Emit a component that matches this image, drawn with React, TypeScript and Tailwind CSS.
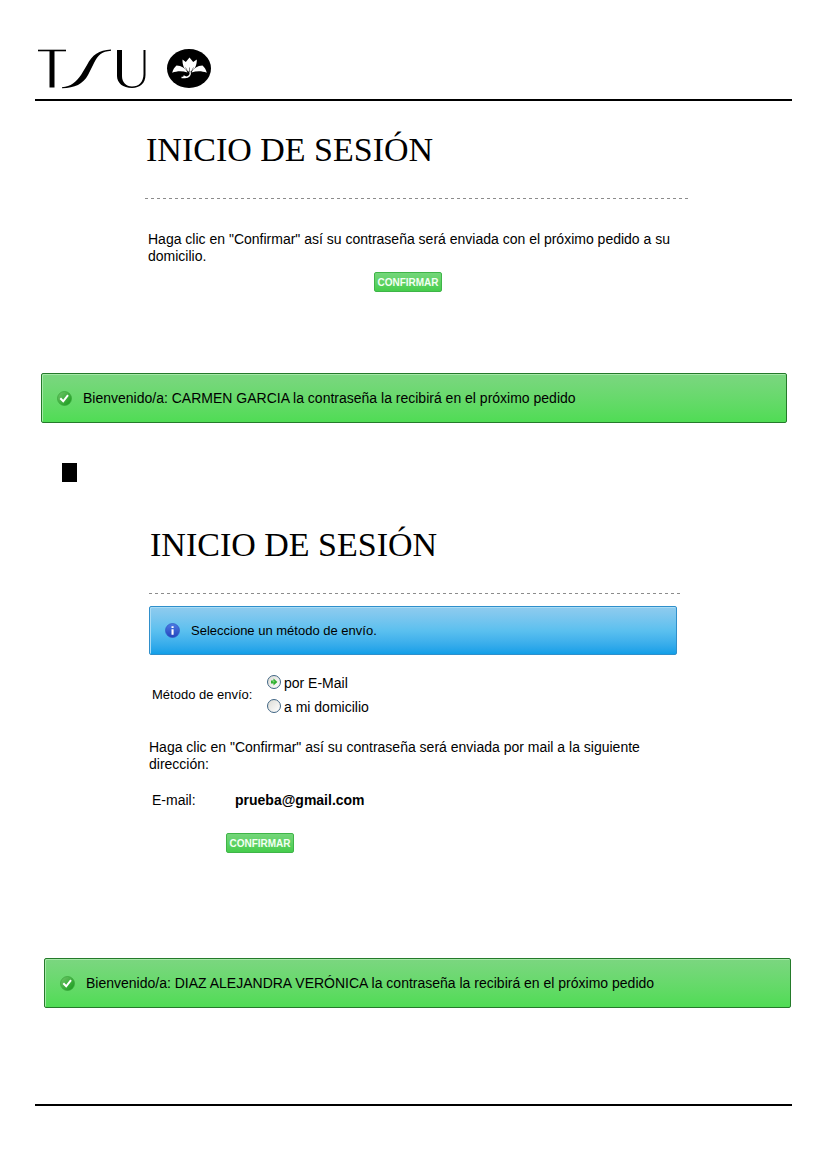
import { useState } from "react";
import type { ReactNode } from "react";

function Logo() {
  return (
    <div className="flex items-start gap-[20px] pl-[3px]">
      <svg viewBox="0 0 109 40" className="h-[40px] w-[109px]" role="img" aria-label="TSU">
        <path d="M0 1.5H28" stroke="#000" strokeWidth="1.6" />
        <path d="M11.5 1H16.500V38.500H11.500Z" />
        <path d="M24 38.300C33 37.500 38 33 43 26L49 16C54 6 61 1 73 .5V1.800C64 2.500 60 6 56 14L50 26C45 35 37 39 24 39.300Z" />
        <path d="M79 1H84V27C84 33 88 37.500 94 37.500C101 37.500 105.500 33 105.500 25V1H107.500V26C107.500 34 102 39 94 39C85 39 79 34 79 27Z" />
      </svg>
      <svg viewBox="0 0 44 40" className="h-[40px] w-[44px]" role="img" aria-label="Flor de loto">
        <ellipse cx="22" cy="19.500" rx="22" ry="19.500" />
        <g fill="#fff">
          <path d="M21 22.500C17 20.500 15.300 15.500 15.500 10.500L18.800 13L22.500 8.500L26.200 13L29.800 10.500C30 15.500 28 20.500 24 22.500Z" />
          <path d="M20.500 23.500C18.500 19.500 14.500 16.500 9.500 16.500C7.500 18.200 6 20.500 5.200 23.800C10 21.800 15.500 21.800 20.500 23.500Z" />
          <path d="M24.500 23.500C26.500 19.500 30.500 16.500 35.500 16.500C37.500 18.200 39 20.500 39.800 23.800C35 21.800 29.500 21.800 24.500 23.500Z" />
        </g>
        <path d="M22.500 23.500V18.500M21 23L18.500 18.500M24 23L26.500 18.500" fill="none" stroke="#000" strokeWidth=".5" />
        <path d="M23 22.500C24 26 22 28.500 18 28.500H14.500M16.500 26.800L19.500 28.500" fill="none" stroke="#fff" strokeWidth="1.400" />
      </svg>
    </div>
  );
}

function SectionTitle({ children }: { children: ReactNode }) {
  return (
    <h1 className="pl-px font-['Liberation_Serif',serif] text-[34px] leading-[40px] whitespace-nowrap text-black">
      {children}
    </h1>
  );
}

function DashedRule() {
  return (
    <div className="h-px bg-[repeating-linear-gradient(90deg,#8c8c8c_0px,#8c8c8c_3px,transparent_3px,transparent_6px)]" />
  );
}

function CheckIcon() {
  return (
    <svg viewBox="0 0 15 15" className="size-[15px] shrink-0" aria-hidden="true">
      <defs>
        <linearGradient id="check-fill" x1="0" y1="0" x2="1" y2="1">
          <stop offset="0" stopColor="#72c66c" />
          <stop offset="1" stopColor="#139a18" />
        </linearGradient>
      </defs>
      <circle cx="7.500" cy="7.500" r="7" fill="url(#check-fill)" stroke="#36a53a" strokeWidth=".7" />
      <path d="M3.300 7.300L6.200 10.300L11 4.200" fill="none" stroke="#fff" strokeWidth="2" />
    </svg>
  );
}

function InfoIcon() {
  return (
    <svg viewBox="0 0 15 15" className="size-[15px] shrink-0" aria-hidden="true">
      <defs>
        <linearGradient id="info-fill" x1="0" y1="0" x2="0" y2="1">
          <stop offset="0" stopColor="#4c7ce4" />
          <stop offset="1" stopColor="#2444bd" />
        </linearGradient>
      </defs>
      <circle cx="7.500" cy="7.500" r="7" fill="url(#info-fill)" stroke="#3158c4" strokeWidth=".7" />
      <path d="M6.500 3.200H8.600V5H6.500ZM6.500 6.200H8.600V11.700H6.500Z" fill="#fff" />
    </svg>
  );
}

function SuccessAlert({ children }: { children: ReactNode }) {
  return (
    <div
      role="status"
      className="flex h-[50px] items-center gap-[11px] rounded-[2px] border border-[#247a2a] bg-linear-to-b from-[#7bd680] to-[#4fdc54] px-[15px] shadow-[inset_1px_1px_0_#a6e8a8]"
    >
      <CheckIcon />
      <p className="whitespace-nowrap">{children}</p>
    </div>
  );
}

function ConfirmButton() {
  return (
    <button
      type="button"
      className="flex h-[20px] w-[68px] items-center justify-center rounded-[2px] border border-[#3fb548] bg-linear-to-b from-[#74d67a] to-[#45cd4c] text-[10px] leading-[13px] font-bold text-[#f2fff2]"
    >
      CONFIRMAR
    </button>
  );
}

function RadioOption({
  label,
  checked,
  onSelect,
}: {
  label: string;
  checked: boolean;
  onSelect: () => void;
}) {
  return (
    <label className="flex h-[24px] items-start gap-[3px]">
      <span className="relative size-[14px]">
        <input
          type="radio"
          name="metodo"
          checked={checked}
          onChange={onSelect}
          className="block size-[14px] appearance-none rounded-full border border-[#406584] bg-linear-to-br from-[#dcdcd6] to-white"
        />
        {checked && (
          <svg viewBox="0 0 14 14" className="pointer-events-none absolute inset-0 size-[14px]" aria-hidden="true">
            <path d="M4 5.500H6.500V3.500L10.400 7L6.500 10.500V8.500H4Z" fill="#2fae2f" />
            <circle cx="6.600" cy="6.600" r="1" fill="#6fd66b" />
          </svg>
        )}
      </span>
      <span>{label}</span>
    </label>
  );
}

export default function App() {
  const [method, setMethod] = useState("mail");

  return (
    <div className="bg-white px-[35px] pt-[49px] pb-[63px] font-['Liberation_Sans',Arial,sans-serif] text-[14px] leading-[17px] text-black">
      <header className="border-b-2 border-black pb-[10px]">
        <Logo />
      </header>

      <main>
        <section className="pt-[29px]">
          <div className="mr-[101px] ml-[110px]">
            <SectionTitle>INICIO DE SESIÓN</SectionTitle>
            <div className="pt-[28px]">
              <DashedRule />
            </div>
            <p className="max-w-[530px] pt-8 pl-[3px]">
              Haga clic en "Confirmar" así su contraseña será enviada con el próximo pedido a su domicilio.
            </p>
            <div className="flex pt-[7px] pl-[229px]">
              <ConfirmButton />
            </div>
          </div>
          <div className="mr-[5px] ml-[6px] pt-[81px]">
            <SuccessAlert>Bienvenido/a: CARMEN GARCIA la contraseña la recibirá en el próximo pedido</SuccessAlert>
          </div>
        </section>

        <div className="mt-[40px] ml-[27px] h-[19px] w-[15px] bg-black" />

        <section className="pt-[43px]">
          <div className="mr-[109px] ml-[114px]">
            <SectionTitle>INICIO DE SESIÓN</SectionTitle>
            <div className="pt-[28px]">
              <DashedRule />
            </div>
            <div className="mt-3 mr-[6px] flex h-[49px] items-center gap-[11px] rounded-[2px] border border-[#2f8fcb] bg-linear-to-b from-[#8fcbee] via-[#5bc0ef] via-50% to-[#0f9fe8] px-[15px] text-[13px] shadow-[inset_1px_1px_0_#a9dcf5]">
              <InfoIcon />
              <p>Seleccione un método de envío.</p>
            </div>
            <div
              role="radiogroup"
              aria-labelledby="metodo-label"
              className="flex items-center pt-5 pl-[3px]"
            >
              <span id="metodo-label" className="w-[115px] pb-[9px] text-[13px]">
                Método de envío:
              </span>
              <div>
                <RadioOption label="por E-Mail" checked={method === "mail"} onSelect={() => setMethod("mail")} />
                <RadioOption label="a mi domicilio" checked={method === "home"} onSelect={() => setMethod("home")} />
              </div>
            </div>
            <p className="max-w-[510px] pt-4">
              Haga clic en "Confirmar" así su contraseña será enviada por mail a la siguiente dirección:
            </p>
            <dl className="flex pt-[19px] pl-[3px]">
              <dt className="w-[83px]">E-mail:</dt>
              <dd className="font-bold">prueba@gmail.com</dd>
            </dl>
            <div className="flex pt-6 pl-[77px]">
              <ConfirmButton />
            </div>
          </div>
          <div className="mr-px ml-[9px] pt-[105px]">
            <SuccessAlert>
              Bienvenido/a: DIAZ ALEJANDRA VERÓNICA la contraseña la recibirá en el próximo pedido
            </SuccessAlert>
          </div>
        </section>
      </main>

      <footer className="mt-[96px] border-t-2 border-black" />
    </div>
  );
}
